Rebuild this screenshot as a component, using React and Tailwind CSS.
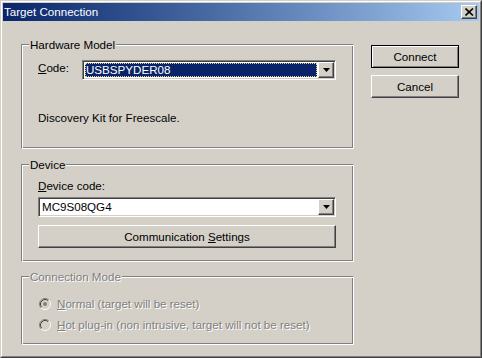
import React from 'react';

const raised = 'border border-t-white border-l-white border-b-[#404040] border-r-[#404040] shadow-[inset_-1px_-1px_0_#808080]';

const GroupBox = ({ label, disabled, className, children }) => (
  <div
    className={`relative border border-t-[#808080] border-l-[#808080] border-b-white border-r-white shadow-[inset_1px_1px_0_#fff,inset_-1px_-1px_0_#808080] ${className}`}
  >
    <span
      className={`absolute left-[7px] top-[-7px] bg-[#d4d0c8] px-[1px] leading-[13px] ${
        disabled ? 'text-[#808080] [text-shadow:1px_1px_0_#fff]' : ''
      }`}
    >
      {label}
    </span>
    {children}
  </div>
);

const DropArrow = () => (
  <div className={`w-[16px] h-[16px] shrink-0 bg-[#d4d0c8] flex items-center justify-center ${raised}`}>
    <svg width="7" height="4" viewBox="0 0 7 4">
      <path d="M0 0h7L3.5 4z" fill="#000" />
    </svg>
  </div>
);

const Combo = ({ value, selected, className }) => (
  <div
    className={`h-[20px] flex border border-t-[#808080] border-l-[#808080] border-b-white border-r-white shadow-[inset_1px_1px_0_#404040,inset_-1px_-1px_0_#d4d0c8] p-px bg-white ${className}`}
  >
    <div className="flex-1 flex p-px min-w-0">
      {selected ? (
        <div className="flex-1 bg-[#0a246a] text-white outline outline-1 outline-dotted outline-[#e8d880] -outline-offset-1 leading-[14px] pl-px">
          {value}
        </div>
      ) : (
        <div className="flex-1 leading-[14px] pl-px">{value}</div>
      )}
    </div>
    <DropArrow />
  </div>
);

const Radio = ({ checked }) => (
  <svg width="12" height="12" viewBox="0 0 12 12" className="shrink-0">
    <circle cx="6" cy="6" r="5" fill="#d4d0c8" />
    <path d="M2.11 9.89A5.5 5.5 0 0 1 9.89 2.11" stroke="#808080" fill="none" />
    <path d="M9.89 2.11A5.5 5.5 0 0 1 2.11 9.89" stroke="#fff" fill="none" />
    <path d="M2.82 9.18A4.5 4.5 0 0 1 9.18 2.82" stroke="#404040" fill="none" />
    <path d="M9.18 2.82A4.5 4.5 0 0 1 2.82 9.18" stroke="#d4d0c8" fill="none" />
    {checked && <circle cx="6" cy="6" r="2" fill="#808080" />}
  </svg>
);

const App = () => {
  return (
    <div
      className="w-[482px] h-[358px] bg-[#d4d0c8] border border-t-[#d4d0c8] border-l-[#d4d0c8] border-b-[#404040] border-r-[#404040] text-[11.6px] text-black"
      style={{ fontFamily: '"Liberation Sans", Arial, sans-serif' }}
    >
      <div className="h-full border border-t-white border-l-white border-b-[#808080] border-r-[#808080] p-px flex flex-col">
        {/* title bar */}
        <div className="h-[18px] shrink-0 flex items-center justify-between bg-gradient-to-r from-[#0a246a] to-[#a6caf0] pl-[1px] pr-[2px]">
          <span className="text-white text-[11.6px] leading-[18px]">Target Connection</span>
          <div className={`w-[16px] h-[14px] bg-[#d4d0c8] flex items-center justify-center ${raised}`}>
            <svg width="9" height="8" viewBox="0 0 9 8">
              <path d="M0.5 0.5L8 7.5M8 0.5L0.5 7.5" stroke="#000" strokeWidth="1.6" />
            </svg>
          </div>
        </div>

        {/* body */}
        <div className="flex pl-[18px] pt-[23px]">
          <div className="w-[333px] flex flex-col">
            <GroupBox label="Hardware Model" className="h-[105px] pt-[15px] pl-[16px]">
              <div className="flex items-start">
                <span className="w-[44px] mt-[1px] leading-[13px]">
                  <u>C</u>ode:
                </span>
                <Combo value="USBSPYDER08" selected className="w-[254px]" />
              </div>
              <p className="mt-[31px] leading-[13px]">Discovery Kit for Freescale.</p>
            </GroupBox>

            <GroupBox label="Device" className="mt-[15px] h-[98px] pt-[14px] pl-[16px]">
              <p className="leading-[13px]">
                <u>D</u>evice code:
              </p>
              <Combo value="MC9S08QG4" className="mt-[5px] w-[298px]" />
              <button
                type="button"
                className={`mt-[8px] w-[298px] h-[23px] bg-[#d4d0c8] leading-[13px] ${raised}`}
              >
                Communication <u>S</u>ettings
              </button>
            </GroupBox>

            <GroupBox label="Connection Mode" disabled className="mt-[14px] h-[69px] pt-[20px] pl-[17px]">
              <div className="flex items-center h-[13px]">
                <Radio checked />
                <span className="ml-[6px] leading-[13px] text-[#808080] [text-shadow:1px_1px_0_#fff]">
                  <u>N</u>ormal (target will be reset)
                </span>
              </div>
              <div className="flex items-center h-[13px] mt-[8px]">
                <Radio />
                <span className="ml-[6px] leading-[13px] text-[#808080] [text-shadow:1px_1px_0_#fff]">
                  <u>H</u>ot plug-in (non intrusive, target will not be reset)
                </span>
              </div>
            </GroupBox>
          </div>

          <div className="ml-[17px] pt-[1px] flex flex-col">
            <button
              type="button"
              className="w-[88px] h-[23px] bg-[#d4d0c8] border border-black shadow-[inset_1px_1px_0_#fff,inset_-1px_-1px_0_#808080] leading-[13px]"
            >
              Connect
            </button>
            <button type="button" className={`mt-[7px] w-[88px] h-[23px] bg-[#d4d0c8] leading-[13px] ${raised}`}>
              Cancel
            </button>
          </div>
        </div>
      </div>
    </div>
  );
};

export default App;
